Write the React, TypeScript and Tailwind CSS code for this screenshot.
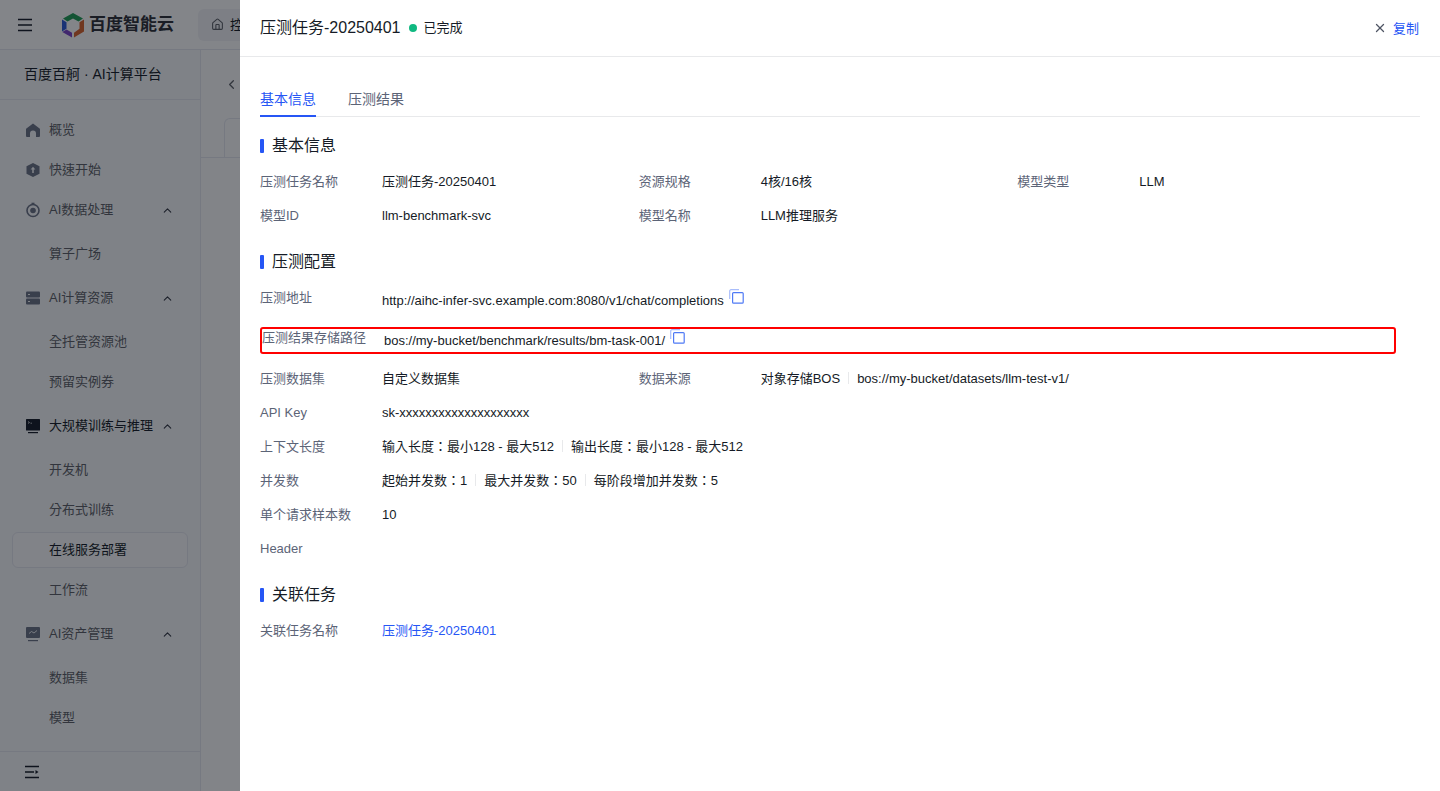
import { ChevronLeft, ChevronUp, House, X } from 'lucide-react';

const FONT = "font-['Liberation_Sans','Noto_Sans_CJK_TC',sans-serif]";

const CopyIcon = () => (
  <svg width="15" height="15" viewBox="0 0 15 15" fill="none" className="shrink-0">
    <path d="M0.700 10V2A1.300 1.300 0 0 1 2 0.700H10" stroke="#a9bdfb" strokeWidth="1.200" />
    <rect x="3.600" y="3.600" width="10.600" height="10.600" rx="1" stroke="#4f7af5" strokeWidth="1.200" />
  </svg>
);

const HomeIcon = () => (
  <svg width="16" height="16" viewBox="0 0 16 16" fill="currentColor">
    <path d="M8 1.500 14.600 6.600A1 1 0 0 1 15 7.400V14a1 1 0 0 1-1 1h-3v-3.500a3 3 0 0 0-6 0V15H2a1 1 0 0 1-1-1V7.400a1 1 0 0 1 .4-.8z" />
  </svg>
);

const ShieldIcon = () => (
  <svg width="16" height="16" viewBox="0 0 16 16" fill="currentColor">
    <path d="M8 1 14.500 4.200v7.600L8 15l-6.500-3.200V4.200z" />
    <path d="M8 4.800 5.600 7.600h1.600V11h1.600V7.600h1.600z" fill="#f7f8fb" />
  </svg>
);

const DataIcon = () => (
  <svg width="16" height="16" viewBox="0 0 16 16" fill="none" stroke="currentColor">
    <circle cx="8" cy="8.500" r="6" strokeWidth="1.600" />
    <circle cx="8" cy="8.500" r="2.800" fill="currentColor" stroke="none" />
    <path d="M6.500 1.500h3" strokeWidth="1.600" />
  </svg>
);

const ServerIcon = () => (
  <svg width="16" height="16" viewBox="0 0 16 16" fill="currentColor">
    <rect x="1" y="1.500" width="14" height="6" rx="1" />
    <rect x="1" y="8.500" width="14" height="6" rx="1" />
    <rect x="3" y="4" width="2" height="1" fill="#f7f8fb" />
    <rect x="3" y="11" width="2" height="1" fill="#f7f8fb" />
  </svg>
);

const TerminalIcon = () => (
  <svg width="16" height="16" viewBox="0 0 16 16" fill="currentColor">
    <rect x="1" y="1" width="14" height="11.500" rx="0.500" />
    <rect x="3" y="14" width="10" height="1.200" />
    <path d="M3 3.500 4.500 4.500 3 5.500M5.500 5.200h1.500" stroke="#f7f8fb" strokeWidth="0.700" fill="none" />
  </svg>
);

const AssetIcon = () => (
  <svg width="16" height="16" viewBox="0 0 16 16" fill="currentColor">
    <rect x="1" y="1" width="14" height="11" rx="1" />
    <rect x="3" y="14" width="10" height="1.200" />
    <path d="M4 7.500 6.500 5.500 9 7l3-2.500" stroke="#f7f8fb" strokeWidth="0.900" fill="none" />
  </svg>
);

type NavItem = { label: string; icon?: React.ReactNode; active?: boolean; children?: { label: string; selected?: boolean }[] };

const NAV: NavItem[] = [
  { label: '概览', icon: <HomeIcon /> },
  { label: '快速开始', icon: <ShieldIcon /> },
  { label: 'AI数据处理', icon: <DataIcon />, children: [{ label: '算子广场' }] },
  { label: 'AI计算资源', icon: <ServerIcon />, children: [{ label: '全托管资源池' }, { label: '预留实例券' }] },
  {
    label: '大规模训练与推理',
    icon: <TerminalIcon />,
    active: true,
    children: [{ label: '开发机' }, { label: '分布式训练' }, { label: '在线服务部署', selected: true }, { label: '工作流' }],
  },
  { label: 'AI资产管理', icon: <AssetIcon />, children: [{ label: '数据集' }, { label: '模型' }] },
];

const Logo = () => (
  <svg width="24" height="26" viewBox="0 0 24 26" fill="none">
    <path d="M12 1 22 6.500 17.500 9.500 12 6.500 6.500 9.500 2 6.500z" fill="#1f9d55" />
    <path d="M1 7.500 5.500 10.300V16.800L1 19.500z" fill="#2a5bd7" />
    <path d="M1.300 20 5.500 17.500 11 20.800V25.500z" fill="#7a45c8" />
    <path d="M23 7.500 18.500 10.300V16.800L13 20.800V25.500L23 19.500z" fill="#d9622b" />
  </svg>
);

const Sidebar = () => (
  <aside className="w-[201px] shrink-0 border-r border-[#e5e7ef] bg-[#f7f8fb] flex flex-col">
    <div className="h-[50px] flex items-center px-6 text-[14px] text-[#151b26] border-b border-[#e5e7ef]">
      百度百舸 · AI计算平台
    </div>
    <nav className="flex-1 px-3 pt-3 flex flex-col gap-1 overflow-hidden">
      {NAV.map((item) => (
        <div key={item.label} className="flex flex-col gap-1">
          <div className={`h-9 flex items-center pl-[13px] pr-[14px] text-[13px] ${item.active ? 'text-[#151b26]' : 'text-[#5c5f66]'}`}>
            <span className={`w-4 mr-2 ${item.active ? 'text-[#151b26]' : 'text-[#6a7285]'}`}>{item.icon}</span>
            <span className="flex-1">{item.label}</span>
            {item.children && <ChevronUp size={13} className="text-[#303540]" />}
          </div>
          {item.children && (
            <div className="py-1 flex flex-col gap-1">
              {item.children.map((child) => (
                <div
                  key={child.label}
                  className={`h-9 flex items-center pl-[36px] text-[13px] rounded-md border ${
                    child.selected ? 'border-[#e5e7ef] bg-[#fafbfd] text-[#151b26]' : 'border-transparent text-[#5c5f66]'
                  }`}
                >
                  {child.label}
                </div>
              ))}
            </div>
          )}
        </div>
      ))}
    </nav>
    <div className="h-10 border-t border-[#e5e7ef] flex items-center pl-[25px]">
      <svg width="15" height="14" viewBox="0 0 15 14" fill="none" stroke="#151b26" strokeWidth="1.300">
        <path d="M0 1.500h14M0 7h9M0 12.500h14" />
        <path d="M10.500 5 13.500 7 10.500 9z" fill="#151b26" stroke="none" />
      </svg>
    </div>
  </aside>
);

const Background = () => (
  <div className="h-full flex flex-col bg-white">
    <header className="h-[50px] shrink-0 flex items-center border-b border-[#e5e7ef] bg-white">
      <svg width="16" height="14" viewBox="0 0 16 14" className="ml-[17px]" fill="none" stroke="#151b26" strokeWidth="1.400">
        <path d="M1 1.500h14M1 7h14M1 12.500h14" />
      </svg>
      <div className="ml-[28px]"><Logo /></div>
      <span className="ml-[4px] text-[17px] font-bold text-[#2d2f36]">百度智能云</span>
      <div className="ml-[24px] h-8 w-[120px] rounded-md bg-[#f2f3f7] flex items-center pl-[13px] text-[13px] text-[#151b26]">
        <House size={13} className="text-[#5c5f66] mr-[6px]" />
        控制台
      </div>
    </header>
    <div className="flex-1 flex min-h-0">
      <Sidebar />
      <main className="flex-1 bg-[#fcfcfd]">
        <div className="h-[108px] border-b border-[#e5e7ef] pl-[23px] pt-[27px] relative">
          <ChevronLeft size={15} className="text-[#5c5f66]" />
          <div className="absolute left-[23px] top-[68px] h-10 w-40 border border-[#e5e7ef] border-b-0 rounded-t-md" />
        </div>
      </main>
    </div>
  </div>
);

const Label = ({ children }: { children: React.ReactNode }) => (
  <div className="w-[122px] shrink-0 text-[13px] leading-[18px] text-[#5c6477]">{children}</div>
);

const Sep = () => <span className="inline-block w-px h-3 bg-[#e8e9eb] mx-2 align-[-1px]" />;

const Field = ({ label, children }: { label: string; children: React.ReactNode }) => (
  <div className="flex min-w-0">
    <Label>{label}</Label>
    <div className="text-[13px] leading-[18px] text-[#151b26] whitespace-nowrap">{children}</div>
  </div>
);

const Section = ({ title }: { title: string }) => (
  <div className="flex items-center h-6 mb-[15px]">
    <span className="w-1 h-[14px] rounded-[1px] bg-[#2656f5] mr-2" />
    <span className="text-[16px] text-[#151b26]">{title}</span>
  </div>
);

const Drawer = () => (
  <div className="absolute inset-y-0 right-0 w-[1200px] bg-white flex flex-col">
    <div className="h-[57px] shrink-0 border-b border-[#e8e9eb] flex items-center pl-5 pr-[21px]">
      <span className="text-[16px] text-[#151b26]">压测任务-20250401</span>
      <span className="w-2 h-2 rounded-full bg-[#10b981] ml-2 mr-[7px]" />
      <span className="text-[13px] text-[#151b26]">已完成</span>
      <div className="ml-auto flex items-center">
        <X size={14} strokeWidth={2.200} className="text-[#4f5564] mr-[6px]" />
        <span className="text-[13px] text-[#2656f5] pt-[1px]">复制</span>
      </div>
    </div>
    <div className="px-5 pt-[24px] flex-1">
      <div className="flex h-9 gap-8 border-b border-[#e8e9eb] text-[14px]">
        <div className="h-9 pt-2 text-[#2656f5] border-b-2 border-[#2656f5]">基本信息</div>
        <div className="h-9 pt-2 text-[#5c6477]">压测结果</div>
      </div>

      <div className="w-[1136px] pt-[17px]">
        <Section title="基本信息" />
        <div className="grid grid-cols-3 gap-y-4">
          <Field label="压测任务名称">压测任务-20250401</Field>
          <Field label="资源规格">4核/16核</Field>
          <Field label="模型类型">LLM</Field>
          <Field label="模型ID">llm-benchmark-svc</Field>
          <Field label="模型名称">LLM推理服务</Field>
        </div>

        <div className="mt-[25px]">
          <Section title="压测配置" />
        </div>
        <div className="flex flex-col gap-4">
          <div className="flex h-[22px]">
            <Label>压测地址</Label>
            <div className="flex text-[13px] leading-[18px] text-[#151b26]">
              <span className="pt-[3px]">http://aihc-infer-svc.example.com:8080/v1/chat/completions</span>
              <span className="ml-[5px]"><CopyIcon /></span>
            </div>
          </div>
          <div className="flex h-[27px] border-2 border-[#ff0000] rounded-[3px]">
            <Label>压测结果存储路径</Label>
            <div className="flex text-[13px] leading-[18px] text-[#151b26]">
              <span className="pt-[3px]">bos://my-bucket/benchmark/results/bm-task-001/</span>
              <span className="ml-[5px]"><CopyIcon /></span>
            </div>
          </div>
          <div className="grid grid-cols-3">
            <Field label="压测数据集">自定义数据集</Field>
            <Field label="数据来源">
              对象存储BOS<Sep />bos://my-bucket/datasets/llm-test-v1/
            </Field>
          </div>
          <Field label="API Key">sk-xxxxxxxxxxxxxxxxxxxx</Field>
          <Field label="上下文长度">
            输入长度：最小128 - 最大512<Sep />输出长度：最小128 - 最大512
          </Field>
          <Field label="并发数">
            起始并发数：1<Sep />最大并发数：50<Sep />每阶段增加并发数：5
          </Field>
          <Field label="单个请求样本数">10</Field>
          <Field label="Header">{''}</Field>
        </div>

        <div className="mt-[25px]">
          <Section title="关联任务" />
        </div>
        <Field label="关联任务名称">
          <span className="text-[#2656f5]">压测任务-20250401</span>
        </Field>
      </div>
    </div>
  </div>
);

export default function App() {
  return (
    <div className={`relative h-[791px] w-[1440px] overflow-hidden ${FONT}`}>
      <Background />
      <div className="absolute inset-0 bg-[#070c14]/50" />
      <Drawer />
    </div>
  );
}
